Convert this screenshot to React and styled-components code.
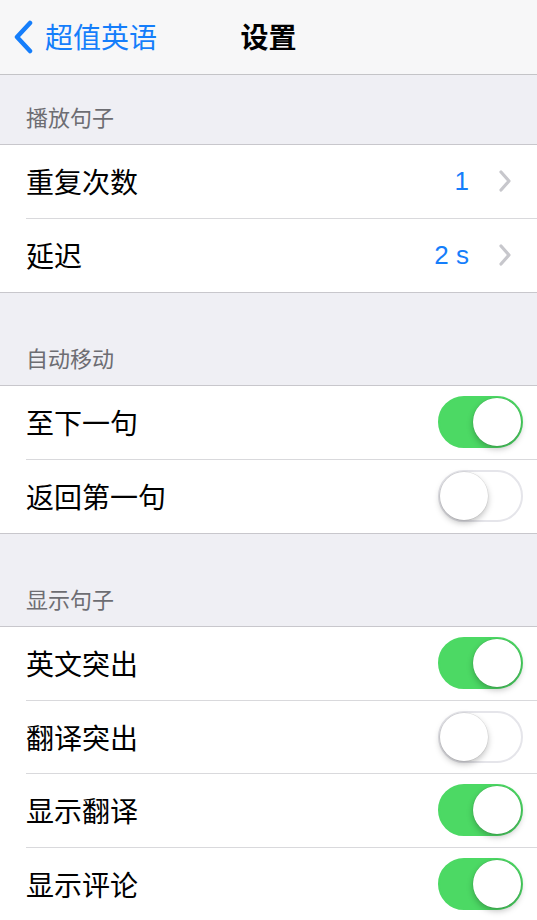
import React, { useState } from "react";
import styled, { createGlobalStyle } from "styled-components";

const GlobalStyle = createGlobalStyle`
  html, body {
    margin: 0;
    padding: 0;
    background: #efeff4;
    font-family: "Liberation Sans", "Noto Sans CJK SC", sans-serif;
  }
`;

const sections = [
  {
    title: "播放句子",
    first: true,
    rows: [
      { label: "重复次数", value: "1" },
      { label: "延迟", value: "2 s" },
    ],
  },
  {
    title: "自动移动",
    rows: [
      { label: "至下一句", on: true },
      { label: "返回第一句", on: false },
    ],
  },
  {
    title: "显示句子",
    rows: [
      { label: "英文突出", on: true },
      { label: "翻译突出", on: false },
      { label: "显示翻译", on: true },
      { label: "显示评论", on: true },
    ],
  },
];

const Switch = ({ on, onToggle }) => (
  <Track $on={on} onClick={onToggle}>
    <Knob $on={on} />
  </Track>
);

const App = () => {
  const [state, setState] = useState(sections);

  const toggle = (si, ri) => {
    setState((prev) =>
      prev.map((s, i) =>
        i !== si
          ? s
          : {
              ...s,
              rows: s.rows.map((r, j) => (j === ri ? { ...r, on: !r.on } : r)),
            }
      )
    );
  };

  return (
    <>
      <GlobalStyle />
      <Page>
        <NavBar>
          <BackButton>
            <svg width="22" height="34" viewBox="0 0 22 34">
              <path
                d="M18 3 L5 17 L18 31"
                fill="none"
                stroke="#157efb"
                strokeWidth="4.5"
                strokeLinecap="round"
                strokeLinejoin="round"
              />
            </svg>
            <span>超值英语</span>
          </BackButton>
          <NavTitle>设置</NavTitle>
        </NavBar>

        {state.map((section, si) => (
          <section key={section.title}>
            <SectionHeader $first={section.first}>{section.title}</SectionHeader>
            <Group>
              {section.rows.map((row, ri) => (
                <Row key={row.label} $last={ri === section.rows.length - 1}>
                  <Label>{row.label}</Label>
                  {row.value !== undefined ? (
                    <Detail>
                      <Value>{row.value}</Value>
                      <svg width="16" height="26" viewBox="0 0 16 26">
                        <path
                          d="M4 4 L12 13 L4 22"
                          fill="none"
                          stroke="#c7c7cc"
                          strokeWidth="3.2"
                          strokeLinecap="round"
                          strokeLinejoin="round"
                        />
                      </svg>
                    </Detail>
                  ) : (
                    <Switch on={row.on} onToggle={() => toggle(si, ri)} />
                  )}
                </Row>
              ))}
            </Group>
          </section>
        ))}
      </Page>
    </>
  );
};

const Page = styled.div`
  width: 537px;
  min-height: 920px;
  background: #efeff4;
`;

const NavBar = styled.header`
  position: relative;
  display: flex;
  align-items: center;
  justify-content: center;
  height: 75px;
  background: #f7f7f8;
  border-bottom: 1px solid #c4c4c7;
  box-sizing: border-box;
`;

const BackButton = styled.div`
  position: absolute;
  left: 12px;
  top: 0;
  bottom: 0;
  display: flex;
  align-items: center;
  gap: 11px;
  color: #157efb;
  font-size: 28px;

  span {
    padding-bottom: 2px;
  }
`;

const NavTitle = styled.h1`
  margin: 0;
  font-size: 28px;
  font-weight: 700;
  color: #000;
  padding-bottom: 2px;
`;

const SectionHeader = styled.div`
  display: flex;
  align-items: flex-end;
  height: ${(p) => (p.$first ? "70px" : "93px")};
  padding: 0 26px 12px;
  box-sizing: border-box;
  font-size: 22px;
  color: #6d6d72;
  border-bottom: 1px solid #c8c7cc;
`;

const Group = styled.div`
  background: #fff;
  border-bottom: 1px solid #c8c7cc;
`;

const Row = styled.div`
  display: flex;
  align-items: center;
  justify-content: space-between;
  height: 73.5px;
  margin-left: 26px;
  padding-right: 14px;
  box-sizing: border-box;
  border-bottom: ${(p) => (p.$last ? "none" : "1px solid #d9d9dc")};
`;

const Label = styled.span`
  font-size: 28px;
  color: #000;
`;

const Detail = styled.div`
  display: flex;
  align-items: center;
  gap: 28px;
  padding-right: 10px;
`;

const Value = styled.span`
  font-size: 26px;
  color: #157efb;
`;

const Track = styled.div`
  position: relative;
  width: 85px;
  height: 52px;
  border-radius: 26px;
  box-sizing: border-box;
  background: ${(p) => (p.$on ? "#4cd964" : "#fff")};
  border: 2px solid ${(p) => (p.$on ? "#4cd964" : "#e5e5ea")};
  cursor: pointer;
`;

const Knob = styled.div`
  position: absolute;
  top: 0;
  left: ${(p) => (p.$on ? "33px" : "0")};
  width: 48px;
  height: 48px;
  border-radius: 50%;
  background: #fff;
  box-shadow: 0 3px 6px rgba(0, 0, 0, 0.25), 0 0 0 0.5px rgba(0, 0, 0, 0.1);
`;

export default App;
